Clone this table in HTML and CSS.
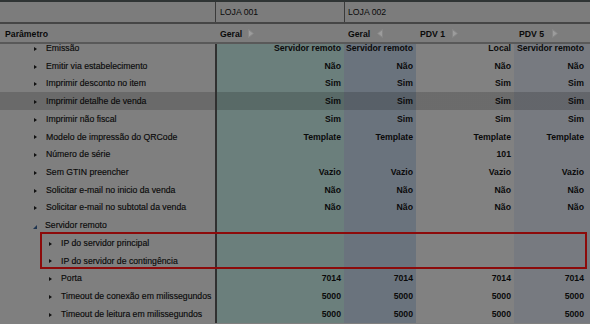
FILE: index.html
```html
<!DOCTYPE html>
<html lang="pt">
<head>
<meta charset="utf-8">
<title>Parâmetros</title>
<link rel="stylesheet" href="styles.css">
</head>
<body>
<div class="grid">
  <div class="head1">
    <div class="h1-left"></div>
    <div class="h1-loja1">LOJA 001</div>
    <div class="h1-loja2">LOJA 002</div>
  </div>
  <div class="head2">
    <div class="h2-cell h2-param">Parâmetro</div>
    <div class="h2-cell c1">Geral <svg class="nav" width="6" height="9" viewBox="0 0 6 9"><polygon points="0.5,0.5 5.5,4.5 0.5,8.5" /></svg></div>
    <div class="h2-cell c2">Geral <svg class="nav" width="6" height="9" viewBox="0 0 6 9"><polygon points="5.5,0.5 0.5,4.5 5.5,8.5" /></svg></div>
    <div class="h2-cell c3">PDV 1 <svg class="nav" width="6" height="9" viewBox="0 0 6 9"><polygon points="0.5,0.5 5.5,4.5 0.5,8.5" /></svg></div>
    <div class="h2-cell c4">PDV 5 <svg class="nav" width="6" height="9" viewBox="0 0 6 9"><polygon points="0.5,0.5 5.5,4.5 0.5,8.5" /></svg></div>
  </div>
  <div class="body">
    <div class="rows">
      <div class="row"><div class="lbl"><span class="arr"></span>Emissão</div><div class="v c1">Servidor remoto</div><div class="v c2">Servidor remoto</div><div class="v c3">Local</div><div class="v c4">Servidor remoto</div></div>
      <div class="row"><div class="lbl"><span class="arr"></span>Emitir via estabelecimento</div><div class="v c1">Não</div><div class="v c2">Não</div><div class="v c3">Não</div><div class="v c4">Não</div></div>
      <div class="row"><div class="lbl"><span class="arr"></span>Imprimir desconto no item</div><div class="v c1">Sim</div><div class="v c2">Sim</div><div class="v c3">Sim</div><div class="v c4">Sim</div></div>
      <div class="row hl"><div class="lbl"><span class="arr"></span>Imprimir detalhe de venda</div><div class="v c1">Sim</div><div class="v c2">Sim</div><div class="v c3">Sim</div><div class="v c4">Sim</div></div>
      <div class="row"><div class="lbl"><span class="arr"></span>Imprimir não fiscal</div><div class="v c1">Sim</div><div class="v c2">Sim</div><div class="v c3">Sim</div><div class="v c4">Sim</div></div>
      <div class="row"><div class="lbl"><span class="arr"></span>Modelo de impressão do QRCode</div><div class="v c1">Template</div><div class="v c2">Template</div><div class="v c3">Template</div><div class="v c4">Template</div></div>
      <div class="row"><div class="lbl"><span class="arr"></span>Número de série</div><div class="v c1"></div><div class="v c2"></div><div class="v c3">101</div><div class="v c4"></div></div>
      <div class="row"><div class="lbl"><span class="arr"></span>Sem GTIN preencher</div><div class="v c1">Vazio</div><div class="v c2">Vazio</div><div class="v c3">Vazio</div><div class="v c4">Vazio</div></div>
      <div class="row"><div class="lbl"><span class="arr"></span>Solicitar e-mail no inicio da venda</div><div class="v c1">Não</div><div class="v c2">Não</div><div class="v c3">Não</div><div class="v c4">Não</div></div>
      <div class="row"><div class="lbl"><span class="arr"></span>Solicitar e-mail no subtotal da venda</div><div class="v c1">Não</div><div class="v c2">Não</div><div class="v c3">Não</div><div class="v c4">Não</div></div>
      <div class="row"><div class="lbl"><span class="arr open"></span>Servidor remoto</div><div class="v c1"></div><div class="v c2"></div><div class="v c3"></div><div class="v c4"></div></div>
      <div class="group">
        <div class="row"><div class="lbl lv2"><span class="arr"></span>IP do servidor principal</div><div class="v c1"></div><div class="v c2"></div><div class="v c3"></div><div class="v c4"></div></div>
        <div class="row"><div class="lbl lv2"><span class="arr"></span>IP do servidor de contingência</div><div class="v c1"></div><div class="v c2"></div><div class="v c3"></div><div class="v c4"></div></div>
      </div>
      <div class="row"><div class="lbl lv2"><span class="arr"></span>Porta</div><div class="v c1">7014</div><div class="v c2">7014</div><div class="v c3">7014</div><div class="v c4">7014</div></div>
      <div class="row"><div class="lbl lv2"><span class="arr"></span>Timeout de conexão em milissegundos</div><div class="v c1">5000</div><div class="v c2">5000</div><div class="v c3">5000</div><div class="v c4">5000</div></div>
      <div class="row"><div class="lbl lv2"><span class="arr"></span>Timeout de leitura em milissegundos</div><div class="v c1">5000</div><div class="v c2">5000</div><div class="v c3">5000</div><div class="v c4">5000</div></div>
    </div>
  </div>
</div>
</body>
</html>
```

FILE: styles.css
```css
* { box-sizing: border-box; }
html, body {
  margin: 0;
  padding: 0;
  background: #7f7f7f;
  width: 590px;
  height: 324px;
  overflow: hidden;
}
body {
  font-family: "Liberation Sans", Arial, sans-serif;
  font-size: 8.7px;
  color: #0a0a0a;
}
.grid {
  width: 590px;
  height: 324px;
  border-top: 2px solid #2f3434;
  display: flex;
  flex-direction: column;
}
.head1 {
  height: 22px;
  flex: none;
  display: flex;
  background: #7c7c7c;
  border-bottom: 2px solid #464646;
}
.h1-left {
  width: 216px;
  border-right: 1px solid #3a3a3a;
}
.h1-loja1 {
  width: 129px;
  border-right: 1px solid #3a3a3a;
  padding-left: 4px;
  line-height: 20px;
}
.h1-loja2 {
  flex: 1;
  padding-left: 3px;
  line-height: 20px;
}
.head2 {
  height: 20px;
  flex: none;
  display: flex;
  background: #7d7d7d;
  border-bottom: 2px solid #595959;
}
.h2-cell {
  font-weight: bold;
  line-height: 18px;
  padding-left: 4px;
  padding-top: 1px;
  display: flex;
  align-items: center;
  white-space: nowrap;
}
.h2-cell .nav {
  margin-left: 6px;
}
.nav polygon {
  fill: #9c9c9c;
  stroke: #878787;
  stroke-width: 1;
}
.h2-param { width: 217px; padding-left: 5px; }
.head2 .c1 { width: 127px; background: none; padding-left: 3px; }
.head2 .c2 { width: 72px; background: none; }
.head2 .c2 .nav { margin-left: 7px; }
.head2 .c3 { width: 98px; background: none; }
.head2 .c3 .nav { margin-left: 7px; }
.head2 .c4 { flex: 1; background: none; padding-left: 5px; }
.head2 .c4 .nav { margin-left: 8px; }

.body {
  flex: 1;
  overflow: hidden;
}
.rows {
  margin-top: -5px;
}
.row {
  display: grid;
  grid-template-columns: 217px 127px 72px 98px 76px;
  height: 17.73px;
}
.row > div {
  padding-top: 2px;
  line-height: 15.73px;
  white-space: nowrap;
  overflow: hidden;
}
.lbl {
  border-right: 2px solid #303030;
  padding-left: 34px;
  display: flex;
  align-items: center;
  -webkit-text-stroke: 0.15px #0a0a0a;
}
.lbl.lv2 { padding-left: 49px; }
.arr {
  display: inline-block;
  width: 0;
  height: 0;
  border-left: 3px solid #111;
  border-top: 2.5px solid transparent;
  border-bottom: 2.5px solid transparent;
  margin-right: 9px;
}
.arr.open {
  border-left: 4px solid transparent;
  border-top: 0;
  border-bottom: 4px solid #1e3450;
  margin-right: 8px;
  margin-left: -1px;
  margin-top: 1px;
}
.v {
  text-align: right;
  font-weight: bold;
  padding-right: 3px;
}
.c1 { background-color: #6b7f7c; }
.c2 { background-color: #6a737d; }
.c3 { background-color: #818181; }
.c4 { background-color: #777a80; padding-right: 6px; }
.row.hl > div {
  background-image: linear-gradient(rgba(0,0,0,0.17), rgba(0,0,0,0.17));
}
.group {
  position: relative;
}
.group::after {
  content: "";
  position: absolute;
  top: -2px;
  bottom: 0;
  left: 40px;
  right: 3px;
  border: 2px solid #8c0a0a;
  pointer-events: none;
}
```
